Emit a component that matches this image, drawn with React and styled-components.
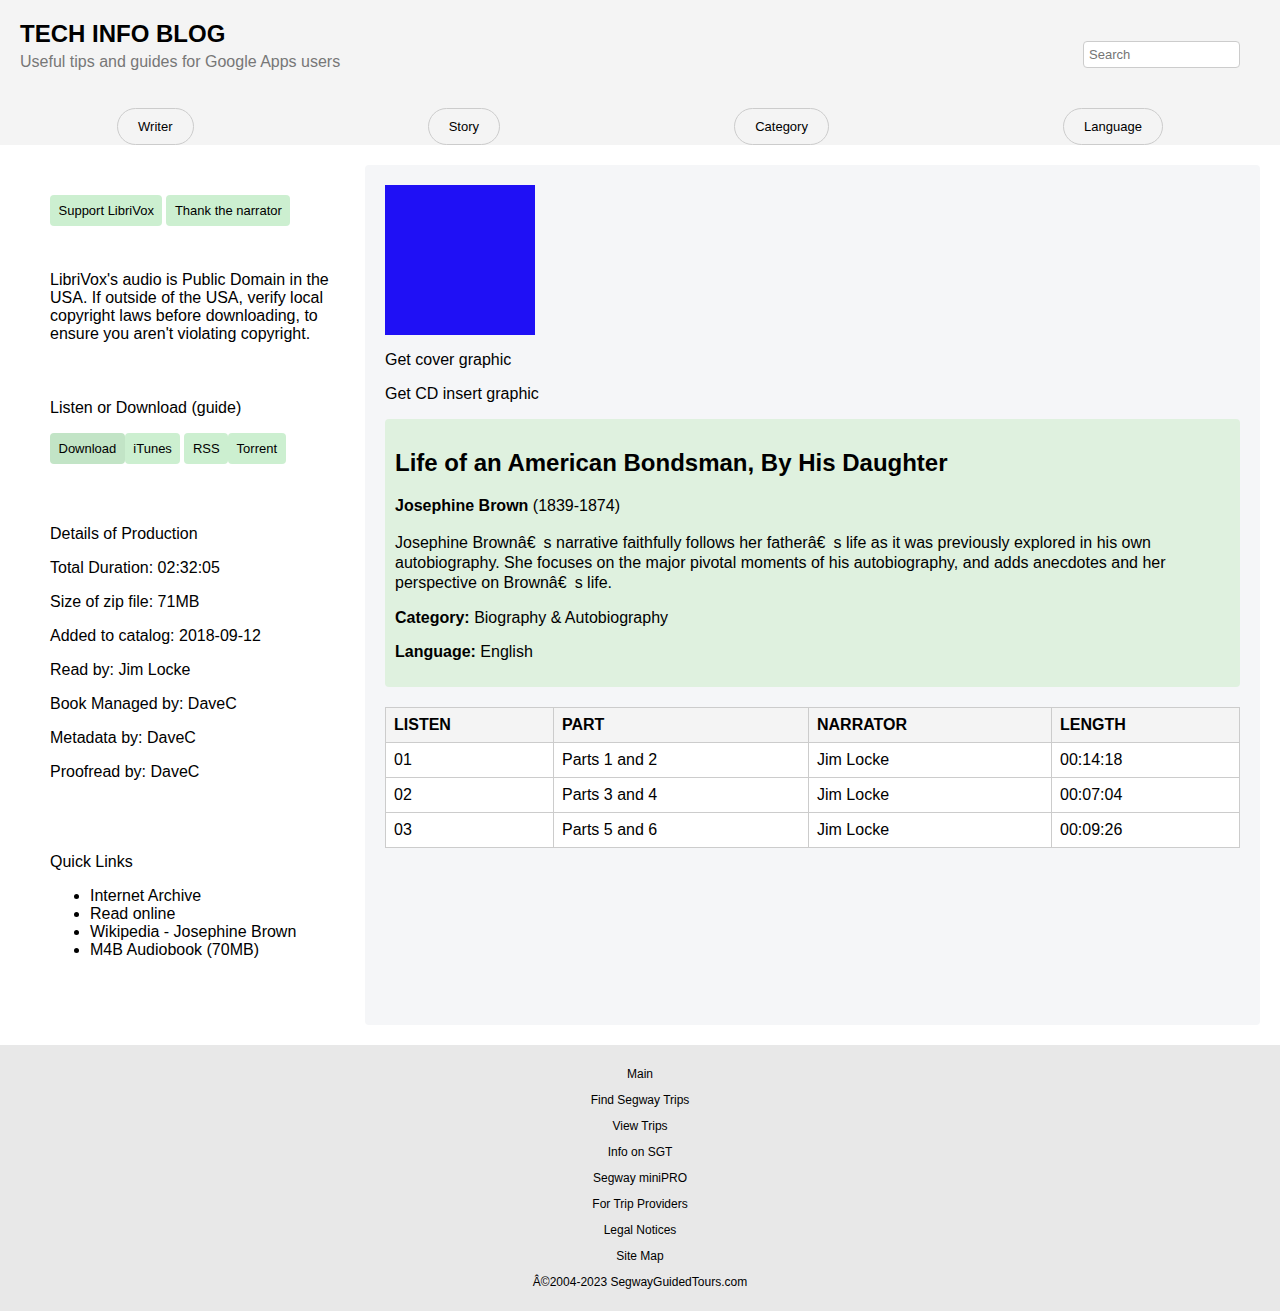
import styled, { createGlobalStyle } from "styled-components";

const GlobalStyle = createGlobalStyle`
  body {
    margin: 0;
    font-family: "Liberation Sans", Arial, sans-serif;
    color: #000;
    background: #fff;
  }
`;

const navItems = ["Writer", "Story", "Category", "Language"];

const details = [
  "Total Duration: 02:32:05",
  "Size of zip file: 71MB",
  "Added to catalog: 2018-09-12",
  "Read by: Jim Locke",
  "Book Managed by: DaveC",
  "Metadata by: DaveC",
  "Proofread by: DaveC",
];

const quickLinks = [
  "Internet Archive",
  "Read online",
  "Wikipedia - Josephine Brown",
  "M4B Audiobook (70MB)",
];

const tracks = [
  { id: "01", part: "Parts 1 and 2", narrator: "Jim Locke", length: "00:14:18" },
  { id: "02", part: "Parts 3 and 4", narrator: "Jim Locke", length: "00:07:04" },
  { id: "03", part: "Parts 5 and 6", narrator: "Jim Locke", length: "00:09:26" },
];

const footerLinks = [
  "Main",
  "Find Segway Trips",
  "View Trips",
  "Info on SGT",
  "Segway miniPRO",
  "For Trip Providers",
  "Legal Notices",
  "Site Map",
  "Â©2004-2023 SegwayGuidedTours.com",
];

const blurb =
  "Josephine Brownâ€\u2002s narrative faithfully follows her fatherâ€\u2002s life as it was previously explored in his own autobiography. She focuses on the major pivotal moments of his autobiography, and adds anecdotes and her perspective on Brownâ€\u2002s life.";

const App = () => {
  return (
    <>
      <GlobalStyle />
      <Header>
        <TopRow>
          <Brand>
            <Title>TECH INFO BLOG</Title>
            <Tagline>Useful tips and guides for Google Apps users</Tagline>
          </Brand>
          <Search placeholder="Search" />
        </TopRow>
        <Nav>
          {navItems.map((item) => (
            <NavButton key={item}>{item}</NavButton>
          ))}
        </Nav>
      </Header>

      <Body>
        <Sidebar>
          <Section>
            <Tag>Support LibriVox</Tag>
            <Tag $ml={4}>Thank the narrator</Tag>
          </Section>

          <Section $mt={45}>
            <Notice>
              LibriVox's audio is Public Domain in the USA. If outside of the USA,
              verify local copyright laws before downloading, to ensure you aren't
              violating copyright.
            </Notice>
          </Section>

          <Section $mt={56}>
            <Line>Listen or Download (guide)</Line>
            <Buttons>
              <Tag $active>Download</Tag>
              <Tag>iTunes</Tag>
              <Tag $ml={4}>RSS</Tag>
              <Tag>Torrent</Tag>
            </Buttons>
          </Section>

          <Section $mt={61}>
            <Line>Details of Production</Line>
            {details.map((d) => (
              <Line key={d} $mt={16}>
                {d}
              </Line>
            ))}
          </Section>

          <Section $mt={72}>
            <Line>Quick Links</Line>
            <LinkList>
              {quickLinks.map((l) => (
                <li key={l}>{l}</li>
              ))}
            </LinkList>
          </Section>
        </Sidebar>

        <Panel>
          <Cover />
          <PanelText $mt={16}>Get cover graphic</PanelText>
          <PanelText $mt={16}>Get CD insert graphic</PanelText>

          <BookCard>
            <BookTitle>Life of an American Bondsman, By His Daughter</BookTitle>
            <CardText>
              <b>Josephine Brown</b> (1839-1874)
            </CardText>
            <Description>{blurb}</Description>
            <CardText>
              <b>Category:</b> Biography &amp; Autobiography
            </CardText>
            <CardText>
              <b>Language:</b> English
            </CardText>
          </BookCard>

          <Table>
            <colgroup>
              <col style={{ width: 168 }} />
              <col style={{ width: 255 }} />
              <col style={{ width: 243 }} />
              <col />
            </colgroup>
            <thead>
              <tr>
                <Th>LISTEN</Th>
                <Th>PART</Th>
                <Th>NARRATOR</Th>
                <Th>LENGTH</Th>
              </tr>
            </thead>
            <tbody>
              {tracks.map((t) => (
                <tr key={t.id}>
                  <Td>{t.id}</Td>
                  <Td>{t.part}</Td>
                  <Td>{t.narrator}</Td>
                  <Td>{t.length}</Td>
                </tr>
              ))}
            </tbody>
          </Table>
        </Panel>
      </Body>

      <Footer>
        {footerLinks.map((f) => (
          <FooterLink key={f}>{f}</FooterLink>
        ))}
      </Footer>
    </>
  );
};

export default App;

const Header = styled.header`
  background: #f4f4f4;
  padding: 20px 0 0;
`;

const TopRow = styled.div`
  display: flex;
  justify-content: space-between;
  align-items: flex-start;
  padding: 0 40px 0 20px;
`;

const Brand = styled.div`
  display: flex;
  flex-direction: column;
`;

const Title = styled.h1`
  margin: 0;
  font-size: 24px;
  line-height: 28px;
  font-weight: bold;
`;

const Tagline = styled.p`
  margin: 5px 0 0;
  font-size: 16px;
  line-height: 18px;
  color: #777;
`;

const Search = styled.input`
  margin-top: 21px;
  width: 157px;
  height: 27px;
  box-sizing: border-box;
  padding: 4px 5px;
  border: 1px solid #ccc;
  border-radius: 4px;
  background: #fff;
  font-family: "Liberation Sans", Arial, sans-serif;
  font-size: 13px;
  &::placeholder {
    color: #757575;
  }
`;

const Nav = styled.nav`
  display: flex;
  justify-content: space-around;
  margin-top: 37px;
`;

const NavButton = styled.div`
  height: 37px;
  box-sizing: border-box;
  display: flex;
  align-items: center;
  padding: 0 20px;
  border: 1px solid #ccc;
  border-radius: 19px;
  background: #f4f4f4;
  font-size: 13px;
  cursor: pointer;
`;

const Body = styled.main`
  display: flex;
  gap: 20px;
  padding: 20px;
`;

const Sidebar = styled.aside`
  width: 285px;
  flex-shrink: 0;
  padding: 30px 10px 66px 30px;
`;

const Section = styled.div`
  margin-top: ${(p) => p.$mt || 0}px;
`;

const Buttons = styled.div`
  display: flex;
  margin-top: 16px;
`;

const Tag = styled.span`
  display: inline-flex;
  align-items: center;
  height: 31px;
  padding: 0 8.5px;
  margin-left: ${(p) => p.$ml || 0}px;
  border-radius: 4px;
  background: ${(p) => (p.$active ? "#c2e4c6" : "#ccefd0")};
  font-size: 13px;
  cursor: pointer;
`;

const Notice = styled.p`
  margin: 0;
  font-size: 16px;
  line-height: 18px;
`;

const Line = styled.p`
  margin: ${(p) => p.$mt || 0}px 0 0;
  font-size: 16px;
  line-height: 18px;
`;

const LinkList = styled.ul`
  margin: 16px 0 0;
  padding-left: 40px;
  font-size: 16px;
  line-height: 18px;
`;

const Panel = styled.section`
  flex: 1;
  background: #f5f6f8;
  border-radius: 4px;
  padding: 20px;
`;

const Cover = styled.div`
  width: 150px;
  height: 150px;
  background: #1f10f5;
`;

const PanelText = styled.p`
  margin: ${(p) => p.$mt || 0}px 0 0;
  font-size: 16px;
  line-height: 18px;
`;

const BookCard = styled.div`
  margin-top: 16px;
  background: #dff1df;
  border-radius: 4px;
  padding: 10px;
`;

const BookTitle = styled.h2`
  margin: 20px 0;
  font-size: 24px;
  line-height: 28px;
`;

const CardText = styled.p`
  margin: 0 0 16px;
  font-size: 16px;
  line-height: 18px;
`;

const Description = styled.p`
  margin: 0 0 16px;
  padding-top: 2px;
  font-size: 16px;
  line-height: 20px;
`;

const Table = styled.table`
  width: 100%;
  margin-top: 20px;
  border-collapse: collapse;
  background: #fff;
  font-size: 16px;
`;

const Th = styled.th`
  height: 35px;
  box-sizing: border-box;
  padding: 0 8px;
  border: 1px solid #ccc;
  background: #f4f4f4;
  text-align: left;
  font-weight: bold;
`;

const Td = styled.td`
  height: 35px;
  box-sizing: border-box;
  padding: 0 8px;
  border: 1px solid #ccc;
`;

const Footer = styled.footer`
  background: #e8e8e8;
  padding: 16px 0 16px;
  display: flex;
  flex-direction: column;
  align-items: center;
`;

const FooterLink = styled.div`
  padding: 6px 0;
  font-size: 12px;
  line-height: 14px;
`;
